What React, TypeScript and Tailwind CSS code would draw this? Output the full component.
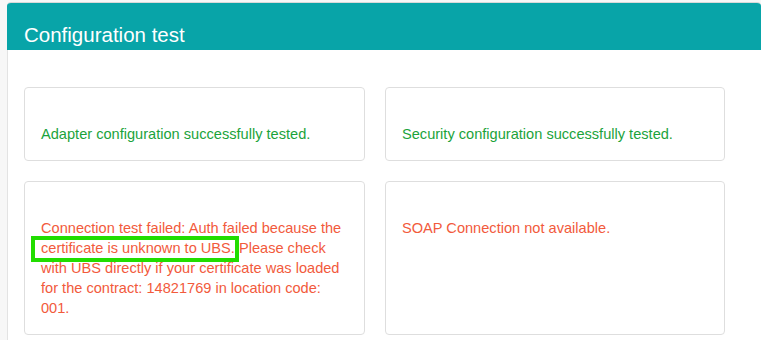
export default function App() {
  return (
    <div className="h-[340px] overflow-hidden bg-[#f7f7f7] pt-[2px] font-['Liberation_Sans',Arial,sans-serif]">
      <div className="ml-[7px] overflow-hidden rounded-t-[4px] border-t border-[#d9d9d9] bg-white">
        {/* Header */}
        <div className="h-[47px] bg-[#08a4a8] pl-[17px] pt-[21px]">
          <h1 className="text-[20.5px] leading-[22px] text-white">Configuration test</h1>
        </div>

        {/* Body */}
        <div className="border-l border-[#e3e3e3] pl-4 pt-[37px] pb-[5px]">
          <div className="grid grid-cols-[341px_340px] gap-x-[20px] gap-y-[20px] text-[14.6px] leading-[20px]">
            <div className="rounded-[4px] border border-[#dedede] px-4 pt-[36px] pb-[16px] text-[#1ba33b]">
              Adapter configuration successfully tested.
            </div>
            <div className="rounded-[4px] border border-[#dedede] px-4 pt-[36px] pb-[16px] text-[#1ba33b]">
              Security configuration successfully tested.
            </div>
            <div className="rounded-[4px] border border-[#dedede] px-4 pt-[36px] pb-[16px] text-[#f25a3c]">
              Connection test failed: Auth failed because the{' '}
              <span className="relative">
                certificate is unknown to UBS.
                <span className="pointer-events-none absolute -top-[4px] -bottom-[6px] -left-[10px] -right-[4px] border-4 border-[#22dd00]"></span>
              </span>{' '}
              Please check with UBS directly if your certificate was loaded for the contract: 14821769 in location code: 001.
            </div>
            <div className="rounded-[4px] border border-[#dedede] px-4 pt-[36px] pb-[16px] text-[#f25a3c]">
              SOAP Connection not available.
            </div>
          </div>
        </div>
      </div>
    </div>
  );
}
